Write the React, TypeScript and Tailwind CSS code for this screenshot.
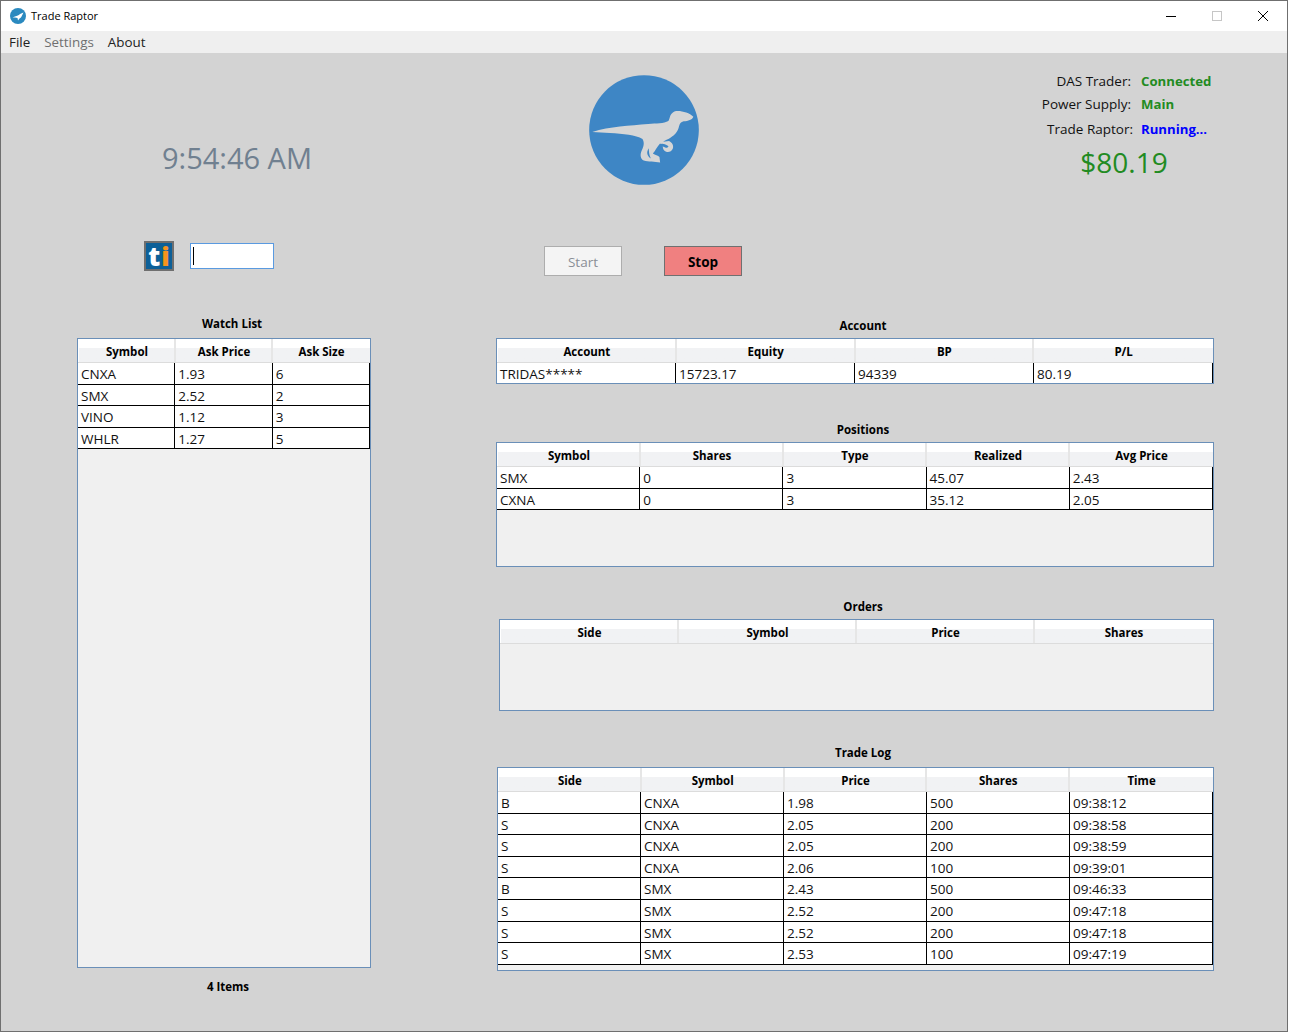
const font = { fontFamily: '"Open Sans", "Noto Sans", sans-serif' };

const gridByCols: Record<number, string> = {
  3: "grid-cols-3",
  4: "grid-cols-4",
  5: "grid-cols-5",
};

function DataTable({
  columns,
  rows,
  className,
  lastRowLine = true,
}: {
  columns: string[];
  rows: string[][];
  className: string;
  lastRowLine?: boolean;
}) {
  const grid = gridByCols[columns.length];
  return (
    <div className={`overflow-hidden border border-[#6a8fb8] bg-[#f0f0f0] ${className}`}>
      <div className={`grid h-6 ${grid} border-b border-[#dcdcdc] bg-white pl-px`}>
        {columns.map((c) => (
          <div
            key={c}
            className="flex items-center justify-center border-r-2 border-[#e6e6e6] bg-gradient-to-b from-white from-40% to-[#f1f2f4] to-40% pl-px pt-[2px] text-[11.5px] font-bold text-black last:border-r-0 last:pl-0"
          >
            {c}
          </div>
        ))}
      </div>
      {rows.map((r, i) => (
        <div
          key={i}
          className={`grid h-[21.6px] ${grid} bg-white ${
            lastRowLine ? "border-b border-black" : ""
          }`}
        >
          {r.map((v, j) => (
            <div
              key={j}
              className="truncate border-r border-black pl-[3px] pt-px text-[13.5px] leading-[21px] text-[#111]"
            >
              {v}
            </div>
          ))}
        </div>
      ))}
    </div>
  );
}

function Title({ children, className }: { children: string; className: string }) {
  return (
    <div className={`h-4 pt-px text-center text-[11.5px] font-bold leading-4 text-black ${className}`}>
      {children}
    </div>
  );
}

function RaptorLogo() {
  return (
    <svg viewBox="27 30 331 330" className="h-[110px] w-[110px]">
      <circle cx="192.5" cy="195" r="165" fill="#3e86c5" />
      <path
        fill="#d6d6d6"
        d="M37 201 C90 184 150 182 205 177 C230 175 252 176 266 168 C272 155 270 146 284 139 C300 135 328 142 341 155 C338 164 325 168 312 169 C303 171 300 176 298 184 C294 200 286 210 272 218 C264 223 256 226 250 230 L268 228 C281 234 285 250 273 259 C262 265 249 259 249 244 C258 250 264 250 266 244 C262 238 250 236 240 236 C232 245 226 258 219 266 C226 270 235 272 239 276 L241 293 C225 290 205 292 192 287 C182 282 180 270 185 258 C191 245 195 235 188 222 C168 210 130 206 90 204 Z"
      />
      <path fill="#3e86c5" d="M207 250 C199 262 201 272 213 281 C208 270 207 260 207 250 Z" />
    </svg>
  );
}

function AppIcon() {
  return (
    <svg viewBox="0 0 16 16" className="h-4 w-4">
      <circle cx="8" cy="8" r="8" fill="#2a89bf" />
      <path
        fill="#fff"
        d="M2.5 9.5 C6 8 9 7.5 10 6 L13.5 4.5 L12 7.5 C11.5 9 10.5 10 9.5 10.5 L8 12.5 L7.5 10 C6 9.5 4 9.5 2.5 9.5 Z"
      />
    </svg>
  );
}

export default function App() {
  return (
    <div style={font} className="h-[1032px] w-[1288px] border border-[#6f6f6f] bg-[#d3d3d3]">
      <div className="flex h-[30px] items-center bg-white pl-[9px]">
        <AppIcon />
        <span className="ml-[5px] text-[11px] text-black">Trade Raptor</span>
        <div className="ml-auto flex pr-[1px]">
          <div className="flex h-[30px] w-[46px] items-center justify-center">
            <svg width="10" height="10" viewBox="0 0 10 10">
              <path d="M0 5.5H10" stroke="#000" />
            </svg>
          </div>
          <div className="flex h-[30px] w-[46px] items-center justify-center">
            <svg width="10" height="10" viewBox="0 0 10 10">
              <rect x="0.5" y="0.5" width="9" height="9" fill="none" stroke="#c6c6c6" />
            </svg>
          </div>
          <div className="flex h-[30px] w-[46px] items-center justify-center">
            <svg width="10" height="10" viewBox="0 0 10 10">
              <path d="M0 0L10 10M10 0L0 10" stroke="#000" />
            </svg>
          </div>
        </div>
      </div>

      <div className="flex h-[22px] items-center gap-[14px] bg-[#efefef] pl-2 text-[13.4px] text-[#222]">
        <span>File</span>
        <span className="text-[#6f6f6f]">Settings</span>
        <span>About</span>
      </div>

      <div className="flex h-[263px]">
        <div className="flex w-[472px] flex-col items-center">
          <div className="mt-[85px] h-10 text-[29px] leading-10 text-[#708090]">9:54:46 AM</div>
          <div className="mt-[63px] flex w-full items-center pl-[143px]">
            <div className="flex h-[30px] w-[30px] items-center justify-center gap-px border-2 border-[#6f6f6f] bg-[#0d6098]">
              <span className="text-[26px] font-extrabold leading-none text-white">t</span>
              <span className="text-[26px] font-extrabold leading-none text-[#f7941d]">i</span>
            </div>
            <div className="ml-4 flex h-[26px] w-[84px] items-center border border-[#5a9ae0] bg-white pl-[2px]">
              <div className="h-[18px] w-px bg-black" />
            </div>
          </div>
        </div>

        <div className="flex w-[300px] flex-col pl-[116px]">
          <div className="mt-[22px]">
            <RaptorLogo />
          </div>
          <div className="mt-[61px] flex gap-[42px] text-[13.5px]">
            <div className="-ml-[45px] flex h-[30px] w-[78px] items-center justify-center border border-[#adadad] bg-[#f4f4f4] pt-[2px] text-[#8a8f96]">
              Start
            </div>
            <div className="flex h-[30px] w-[78px] items-center justify-center border border-[#6f7070] bg-[#f08080] pt-[2px] font-bold text-black">
              Stop
            </div>
          </div>
        </div>

        <div className="flex flex-1 flex-col pl-[258px] pt-[17px] text-[13.5px] text-[#111]">
          <div className="flex h-[22px] items-center">
            <span className="w-[100px] text-right">DAS Trader:</span>
            <span className="ml-[10px] pt-px text-[13.2px] font-bold text-[#228b22]">Connected</span>
          </div>
          <div className="mt-px flex h-[22px] items-center">
            <span className="w-[100px] text-right">Power Supply:</span>
            <span className="ml-[10px] pt-px text-[13.2px] font-bold text-[#228b22]">Main</span>
          </div>
          <div className="mt-[3px] flex h-[22px] items-center">
            <span className="w-[102px] text-right">Trade Raptor:</span>
            <span className="ml-2 pt-px text-[13.2px] font-bold text-[#0000ff]">Running...</span>
          </div>
          <div className="mt-[2px] h-10 w-[186px] text-center text-[28px] leading-10 text-[#228b22]">
            $80.19
          </div>
        </div>
      </div>

      <div className="flex">
        <div className="ml-[76px] mt-[-1px] w-[294px]">
          <Title className="pl-4">Watch List</Title>
          <DataTable
            className="mt-[7px] h-[630px]"
            columns={["Symbol", "Ask Price", "Ask Size"]}
            rows={[
              ["CNXA", "1.93", "6"],
              ["SMX", "2.52", "2"],
              ["VINO", "1.12", "3"],
              ["WHLR", "1.27", "5"],
            ]}
          />
          <Title className="mt-[10px] pl-2">4 Items</Title>
        </div>

        <div className="ml-[125px] mt-px w-[718px]">
          <Title className="pl-4">Account</Title>
          <DataTable
            className="mt-[5px] h-[46px]"
            columns={["Account", "Equity", "BP", "P/L"]}
            rows={[["TRIDAS*****", "15723.17", "94339", "80.19"]]}
            lastRowLine={false}
          />

          <Title className="mt-[37px] pl-4">Positions</Title>
          <DataTable
            className="mt-[5px] h-[125px]"
            columns={["Symbol", "Shares", "Type", "Realized", "Avg Price"]}
            rows={[
              ["SMX", "0", "3", "45.07", "2.43"],
              ["CXNA", "0", "3", "35.12", "2.05"],
            ]}
          />

          <Title className="mt-[31px] pl-4">Orders</Title>
          <DataTable
            className="ml-[3px] mt-[5px] h-[92px]"
            columns={["Side", "Symbol", "Price", "Shares"]}
            rows={[]}
          />

          <Title className="mt-[33px] pl-4">Trade Log</Title>
          <DataTable
            className="ml-px mt-[7px] h-[204px]"
            columns={["Side", "Symbol", "Price", "Shares", "Time"]}
            rows={[
              ["B", "CNXA", "1.98", "500", "09:38:12"],
              ["S", "CNXA", "2.05", "200", "09:38:58"],
              ["S", "CNXA", "2.05", "200", "09:38:59"],
              ["S", "CNXA", "2.06", "100", "09:39:01"],
              ["B", "SMX", "2.43", "500", "09:46:33"],
              ["S", "SMX", "2.52", "200", "09:47:18"],
              ["S", "SMX", "2.52", "200", "09:47:18"],
              ["S", "SMX", "2.53", "100", "09:47:19"],
            ]}
          />
        </div>
      </div>
    </div>
  );
}
